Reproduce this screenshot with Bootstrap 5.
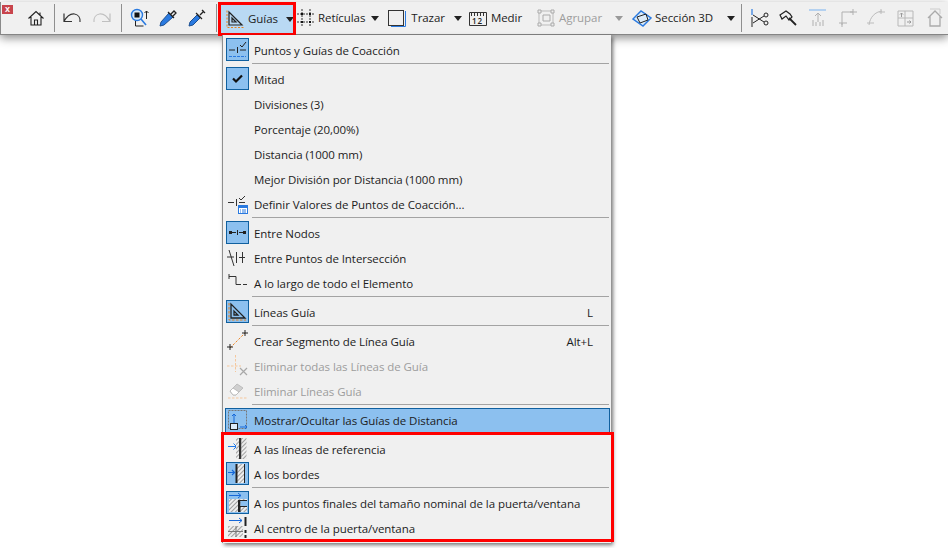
<!DOCTYPE html>
<html lang="es"><head><meta charset="utf-8"><title>Guías</title>
<link href="https://cdn.jsdelivr.net/npm/bootstrap@5.3.0/dist/css/bootstrap.min.css" rel="stylesheet">
<style>
html,body{height:100%;margin:0;background:#fff;overflow:hidden}
body{font-family:"Open Sans","Noto Sans",sans-serif;font-size:11.5px;letter-spacing:-.06px;color:#1c1c1c;line-height:16px;white-space:nowrap}
.stage{position:relative;height:548px;padding-top:2px}
.tbar{position:relative;z-index:2;height:33px;background:#f0f0f0;border-left:1px solid #8a8a8a;border-bottom:1px solid #858585;box-shadow:0 3px 9px rgba(0,0,0,.45)}
.tclose{flex:none;width:11px;height:9px;background:#c8444c;color:#fff;font:bold 9px/9px "Liberation Sans",sans-serif;text-align:center;margin:3px 0 0 1px}
.tico{width:20px;height:20px;flex:none;display:block}
.tsep{width:1px;height:28px;background:#8f8f8f;flex:none}
.tcaret{width:0;height:0;border:4px solid transparent;border-top:5px solid #222;border-bottom:0;flex:none}
.tcaret.off{border-top-color:#999}
.off-t{color:#9d9d9d}
.guias{width:72px;height:28px;margin-top:2px;background:#b9d9f3;outline:3px solid #f00;flex:none;padding-left:4px}
.m1{margin-left:1px}.m2{margin-left:2px}.m3{margin-left:3px}.m4{margin-left:4px}.m5{margin-left:5px}.m6{margin-left:6px}.m7{margin-left:7px}.m8{margin-left:8px}.m9{margin-left:9px}.m10{margin-left:10px}.m11{margin-left:11px}.m12{margin-left:12px}.m13{margin-left:13px}.m14{margin-left:14px}.m15{margin-left:15px}.m16{margin-left:16px}.m17{margin-left:17px}
.gmenu{position:absolute;z-index:3;left:222px;top:35px;width:389px;height:508px;background:#f0f0f0;border-left:1px solid #8f8f8f;box-shadow:2px 2px 4px rgba(0,0,0,.55);padding-top:3px}
.mrow{height:25px;padding-left:3px;padding-right:18px}
.mbox{width:23px;height:23px;flex:none;display:block;align-self:flex-start}
.mtxt{margin-left:5px}
.mkey{margin-left:auto}
.msep{height:4px;margin-left:29px;margin-right:2px;border-top:1px solid #a3a3a3}
.mhi{height:25px;margin-left:2px;margin-right:1px;background:#8cc0ef;border:1px solid #10609f}
.mhi .mbox{margin-top:-1px}
.redzone{position:relative;margin-top:4px}
.redzone::after{content:"";position:absolute;left:-2px;right:-3px;top:-5px;bottom:-1px;border:3px solid #f00;pointer-events:none}
</style></head><body>
<svg width="0" height="0" class="position-absolute"><defs>
<pattern id="hat" width="3" height="3" patternUnits="userSpaceOnUse" patternTransform="rotate(45)"><rect width="3" height="3" fill="#eee"/><rect width="1" height="3" fill="#a0a0a0"/></pattern>
</defs></svg>
<div class="stage">
<div class="tbar d-flex align-items-center">
 <div class="tclose align-self-start">x</div>
 <svg class="tico m13" viewBox="0 0 20 20"><path d="M2.500 10.500 10 3.500l7.500 7M5 9v8h10V9M8.500 17v-5h3v5M14 4.500v2.500" fill="none" stroke="#222" stroke-width="1.100"/></svg>
 <div class="tsep m8"></div>
 <svg class="tico m7" viewBox="0 0 20 20"><path d="M2 5.500v8h8M2 13.500C5 8 9 5.500 12.500 6c3.500.5 6 3.500 5.500 8" fill="none" stroke="#333" stroke-width="1.200"/></svg>
 <svg class="tico m10" viewBox="0 0 20 20"><path d="M18 5.500v8h-8M18 13.500C15 8 11 5.500 7.500 6c-3.500.5-6 3.500-5.500 8" fill="none" stroke="#c0c0c0" stroke-width="1.200"/></svg>
 <div class="tsep m9"></div>
 <svg class="tico m8" viewBox="0 0 20 20"><circle cx="7" cy="7" r="5.500" fill="#d8e9f8" stroke="#2a7ae0" stroke-width="1.400"/><rect x="4.500" y="4.500" width="5" height="5" fill="#111"/><path d="M11 11l5 6" stroke="#2a7ae0" stroke-width="1.600"/><path d="M16.500 11V3M14.500 5l2-2 2 2M5.500 13v5h8" fill="none" stroke="#222"/></svg>
 <svg class="tico m8" viewBox="0 0 20 20"><path d="M11 5 3 14l-1 4 4-1 9-8z" fill="#2a7ae0" stroke="#1c4f90"/><path d="M10 4l6 6M13 6l3-3 2 2-3 3" fill="none" stroke="#222" stroke-width="1.300"/></svg>
 <svg class="tico m9" viewBox="0 0 20 20"><path d="M10 7 3 14l-1 4 4-1 7-7z" fill="#2a7ae0" stroke="#1c4f90"/><path d="M9 5l6 6M13 7l4-4M15 2l3 3" fill="none" stroke="#222" stroke-width="1.300"/></svg>
 <div class="tsep m9"></div>
 <div class="guias m4 d-flex align-items-center">
  <svg class="tico" viewBox="0 0 20 20"><path d="M2 1.500v17h17" fill="none" stroke="#e8821e" stroke-dasharray="2 1.500"/><path d="M4 3v13h13zM7 9v4h4z" fill="none" stroke="#222" stroke-width="1.200"/></svg>
  <span class="m3">Guías</span><span class="tcaret m8"></span>
 </div>
 <svg class="tico m3" viewBox="0 0 20 20"><path d="M1 6h18M1 14h18M6 1v18M14 1v18" stroke="#333" stroke-dasharray="2 1"/><path d="M5 5h2v2H5zM13 5h2v2h-2zM5 13h2v2H5zM13 13h2v2h-2z" fill="#111"/></svg>
 <span class="m2">Retículas</span><span class="tcaret m6"></span>
 <svg class="tico m8" viewBox="0 0 20 20"><rect x="1.500" y="2.500" width="15" height="15" fill="none" stroke="#333"/><path d="M18.500 3v15.500H4" fill="none" stroke="#2a7ae0"/></svg>
 <span class="m4">Trazar</span><span class="tcaret m9"></span>
 <svg class="tico m6" viewBox="0 0 20 20"><path d="M1.500 4.500h17v13h-17z" fill="none" stroke="#333"/><path d="M3.500 5v3M6.500 5v3M9.500 5v3M12.500 5v3M15.500 5v3" stroke="#333"/><text x="4" y="16" font-size="8" font-family="Open Sans,sans-serif" font-weight="600" fill="#222" letter-spacing="1">12</text></svg>
 <span class="m3">Medir</span>
 <svg class="tico m14" viewBox="0 0 20 20"><path d="M3 3h14v14H3z" fill="none" stroke="#bbb"/><path d="M2 2h3v3H2zM15 2h3v3h-3zM2 15h3v3H2zM15 15h3v3h-3z" fill="#eee" stroke="#aaa"/><path d="M7 7h7v6H7z" fill="none" stroke="#aaa"/></svg>
 <span class="m3 off-t">Agrupar</span><span class="tcaret off m13"></span>
 <svg class="tico m9" viewBox="0 0 20 20"><path d="M1 11 9 3l10 7-8 8z" fill="#dcebf8" stroke="#2a7ae0" stroke-width="1.400"/><path d="M5 9l9-3 2 6-8 3z" fill="none" stroke="#222"/></svg>
 <span class="m3">Sección 3D</span><span class="tcaret m14"></span>
 <div class="tsep m6"></div>
 <svg class="tico m8" viewBox="0 0 20 20"><path d="M2 1v6" stroke="#2a7ae0" stroke-width="1.200"/><path d="M2 9v10" stroke="#222"/><path d="M3 7l11 7M3 15l11-7" fill="none" stroke="#222"/><circle cx="16" cy="7" r="2" fill="none" stroke="#222"/><circle cx="16" cy="15" r="2" fill="none" stroke="#222"/></svg>
 <svg class="tico m8" viewBox="0 0 20 20"><path d="M2 7l6-4 4 3 2 3-3 3-3-4-4 3z" fill="none" stroke="#222" stroke-width="1.200"/><path d="M11 10l7 7" stroke="#222" stroke-width="1.800"/></svg>
 <svg class="tico m10" viewBox="0 0 20 20"><path d="M1 2h17" stroke="#8cbdf0" stroke-width="1.200"/><path d="M10 14V5M7 8l3-3 3 3M5 12v6M8 14v4M12 14v4M15 12v6" fill="none" stroke="#b0b0b0"/></svg>
 <svg class="tico m10" viewBox="0 0 20 20"><path d="M4 17V4h11M1 15h8M15 1v6M4 15v4M12 4h7" fill="none" stroke="#b0b0b0"/></svg>
 <svg class="tico m8" viewBox="0 0 20 20"><path d="M3 17C4 9 9 4 16 3M1 15h7M15 1v5M13 4h6" fill="none" stroke="#bcbcbc"/></svg>
 <svg class="tico m9" viewBox="0 0 20 20"><path d="M3 3h15v15H3zM10 3v15M3 10h15" fill="none" stroke="#b8b8b8"/><path d="M6.500 9V5M5 6.500l1.500-1.500L8 6.500M12 14h4M14.500 12.500 16 14l-1.500 1.500" fill="none" stroke="#999"/></svg>
 <svg class="tico m10" viewBox="0 0 20 20"><path d="M3 10 10 3l7 7M5 8v10h10V8" fill="none" stroke="#aaa" stroke-width="1.300"/><path d="M5 1h10v5" fill="none" stroke="#ccc"/></svg>
</div>

<div class="gmenu">
 <div class="mrow d-flex align-items-center">
  <svg class="mbox" viewBox="0 0 23 23"><rect x=".5" y=".5" width="22" height="22" fill="#8cc0ef" stroke="#10609f"/><path d="M3 12h6M11.500 9v6M14 12h6M14 7l2 2 4-5" fill="none" stroke="#222"/><path d="M3 18.500h17" stroke="#2a7ae0" stroke-dasharray="3 1"/></svg>
  <span class="mtxt">Puntos y Guías de Coacción</span></div>
 <div class="msep"></div>
 <div class="mrow d-flex align-items-center">
  <svg class="mbox" viewBox="0 0 23 23"><rect x=".5" y=".5" width="22" height="22" fill="#8cc0ef" stroke="#10609f"/><path d="M7 11.500l3 3 6-6" fill="none" stroke="#111" stroke-width="2.200"/></svg>
  <span class="mtxt">Mitad</span></div>
 <div class="mrow d-flex align-items-center"><span class="mbox"></span><span class="mtxt">Divisiones (3)</span></div>
 <div class="mrow d-flex align-items-center"><span class="mbox"></span><span class="mtxt">Porcentaje (20,00%)</span></div>
 <div class="mrow d-flex align-items-center"><span class="mbox"></span><span class="mtxt">Distancia (1000 mm)</span></div>
 <div class="mrow d-flex align-items-center"><span class="mbox"></span><span class="mtxt">Mejor División por Distancia (1000 mm)</span></div>
 <div class="mrow d-flex align-items-center">
  <svg class="mbox" viewBox="0 0 23 23"><path d="M2 10.500h6M10.500 7v7M13 10.500h6M13 6l2 2 4-4" fill="none" stroke="#333"/><rect x="12.500" y="13.500" width="9" height="8" fill="#fff" stroke="#2a7ae0"/><path d="M12 14h10v2H12z" fill="#2a7ae0"/><path d="M14 18h1M16 18h4M14 20h1M16 20h4" stroke="#2a7ae0"/></svg>
  <span class="mtxt">Definir Valores de Puntos de Coacción...</span></div>
 <div class="msep"></div>
 <div class="mrow d-flex align-items-center">
  <svg class="mbox" viewBox="0 0 23 23"><rect x=".5" y=".5" width="22" height="22" fill="#8cc0ef" stroke="#10609f"/><path d="M3 10h3v3H3zM17 10h3v3h-3z" fill="#222"/><path d="M6 11.500h4M13 11.500h4M11.500 9v5" fill="none" stroke="#222"/></svg>
  <span class="mtxt">Entre Nodos</span></div>
 <div class="mrow d-flex align-items-center">
  <svg class="mbox" viewBox="0 0 23 23"><path d="M3 4l5 16M1 11h7M10.500 6v11M13 11.500h6M16.500 6v11" fill="none" stroke="#333"/></svg>
  <span class="mtxt">Entre Puntos de Intersección</span></div>
 <div class="mrow d-flex align-items-center">
  <svg class="mbox" viewBox="0 0 23 23"><path d="M3 5.500h7v8h5M17 13.500h4M3 3v5" fill="none" stroke="#333"/></svg>
  <span class="mtxt">A lo largo de todo el Elemento</span></div>
 <div class="msep"></div>
 <div class="mrow d-flex align-items-center">
  <svg class="mbox" viewBox="0 0 23 23"><rect x=".5" y=".5" width="22" height="22" fill="#8cc0ef" stroke="#10609f"/><path d="M3 3v17h17" fill="none" stroke="#e8821e" stroke-dasharray="2.500 1.500"/><path d="M5 4v14h14zM8 11v4h4z" fill="none" stroke="#222" stroke-width="1.300"/></svg>
  <span class="mtxt">Líneas Guía</span><span class="mkey">L</span></div>
 <div class="msep"></div>
 <div class="mrow d-flex align-items-center">
  <svg class="mbox" viewBox="0 0 23 23"><path d="M4 19 19 4" stroke="#ef8a2c" stroke-dasharray="2.500 1.500"/><path d="M1 18h6M4 15v6M16 4h6M19 1v6" stroke="#222"/></svg>
  <span class="mtxt">Crear Segmento de Línea Guía</span><span class="mkey">Alt+L</span></div>
 <div class="mrow d-flex align-items-center">
  <svg class="mbox" viewBox="0 0 23 23"><path d="M1 12h14M9.500 1v17" stroke="#f5c79c" stroke-dasharray="2.500 1.500"/><path d="M14 14l7 7M21 14l-7 7" stroke="#a8a8a8" stroke-width="1.200"/></svg>
  <span class="mtxt off-t">Eliminar todas las Líneas de Guía</span></div>
 <div class="mrow d-flex align-items-center">
  <svg class="mbox" viewBox="0 0 23 23"><path d="M4 12 11 5l6 4-7 7H7z" fill="#cfcfcf" stroke="#bdbdbd"/><path d="M4 12l3-3 6 4-3 3H7z" fill="#fff" stroke="#bdbdbd"/><path d="M2 19h19" stroke="#f5c79c" stroke-dasharray="2.500 1.500"/></svg>
  <span class="mtxt off-t">Eliminar Líneas Guía</span></div>
 <div class="msep"></div>
 <div class="mhi d-flex align-items-center">
  <svg class="mbox" viewBox="0 0 23 23"><rect x="2.500" y="2.500" width="18" height="18" fill="none" stroke="#777" stroke-dasharray="2 1"/><path d="M8 6v10M6 8l2-2 2 2" fill="none" stroke="#1668d8"/><rect x="4.500" y="15.500" width="7" height="6" fill="#dcebf8" stroke="#222"/><path d="M14 19h7M19 17l2 2-2 2" fill="none" stroke="#1668d8"/></svg>
  <span class="mtxt">Mostrar/Ocultar las Guías de Distancia</span></div>
 <div class="redzone">
 <div class="mrow d-flex align-items-center">
  <svg class="mbox" viewBox="0 0 23 23"><path d="M2 9.500h8M7.500 6.500l3 3-3 3" fill="none" stroke="#1e78e8"/><rect x="10" y="1" width="3" height="21" fill="url(#hat)"/><rect x="13" y="1" width="2.500" height="21" fill="#333"/><rect x="15.500" y="1" width="5" height="21" fill="url(#hat)"/></svg>
  <span class="mtxt">A las líneas de referencia</span></div>
 <div class="mrow d-flex align-items-center">
  <svg class="mbox" viewBox="0 0 23 23"><rect x=".5" y=".5" width="22" height="22" fill="#8cc0ef" stroke="#10609f"/><path d="M2 10.500h6M6 8l2.500 2.500L6 13" fill="none" stroke="#1668d8" stroke-width="1.200"/><rect x="10" y="2" width="9" height="19" fill="url(#hat)"/><path d="M10.500 2v19" stroke="#222" stroke-width="2"/><path d="M18.500 2v19" stroke="#222"/></svg>
  <span class="mtxt">A los bordes</span></div>
 <div class="msep"></div>
 <div class="mrow d-flex align-items-center">
  <svg class="mbox" viewBox="0 0 23 23"><rect x=".5" y=".5" width="22" height="22" fill="#8cc0ef" stroke="#10609f"/><path d="M3 4.500h12M12 2l3 2.500L12 7" fill="none" stroke="#1668d8"/><rect x="3" y="8" width="18" height="13" fill="url(#hat)"/><rect x="12" y="9" width="2.500" height="12" fill="#222"/><path d="M14 9.500h7M14 15.500h7" stroke="#222"/><rect x="14.500" y="10" width="6.500" height="5" fill="#8cc0ef"/></svg>
  <span class="mtxt">A los puntos finales del tamaño nominal de la puerta/ventana</span></div>
 <div class="mrow d-flex align-items-center">
  <svg class="mbox" viewBox="0 0 23 23"><path d="M3 4.500h13M13 2l3 2.500L13 7" fill="none" stroke="#1668d8"/><rect x="2" y="10" width="15" height="11" fill="url(#hat)"/><path d="M10 10v11M2 15.500h15" stroke="#777"/><path d="M19.500 1v9M19.500 14v3M19.500 19v3" stroke="#222" stroke-width="2"/></svg>
  <span class="mtxt">Al centro de la puerta/ventana</span></div>
 </div>
</div>
</div>
<script src="https://cdn.jsdelivr.net/npm/bootstrap@5.3.0/dist/js/bootstrap.bundle.min.js"></script>
</body></html>
